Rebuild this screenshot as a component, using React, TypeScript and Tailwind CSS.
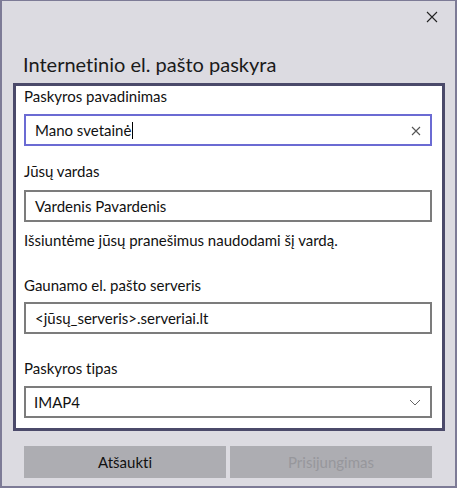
const font = "font-['Lato','Liberation_Sans',sans-serif] [font-variant-ligatures:none]";

function Field({ children, focused }: { children: React.ReactNode; focused?: boolean }) {
  return (
    <div
      className={`relative mx-[8px] flex h-[32px] w-[408px] items-center border-2 bg-white pl-[9px] text-[15px] leading-[28px] text-[#111] ${
        focused ? 'border-[#6b6bd3]' : 'border-[#7c7c7c]'
      }`}
    >
      {children}
    </div>
  );
}

function Label({ children, className = '' }: { children: React.ReactNode; className?: string }) {
  return <div className={`ml-[8px] h-[20px] text-[15px] leading-[20px] text-[#111] ${className}`}>{children}</div>;
}

export default function App() {
  return (
    <div className={`${font} flex h-[488px] w-[457px] flex-col border-t border-r-2 border-b-2 border-l-2 border-[#7d7b96] bg-[#dcdbe1]`}>
      {/* header */}
      <div className="flex h-[49px] justify-end pt-[10px] pr-[17px]">
        <svg width="12" height="12" viewBox="0 0 12 12" className="text-[#222]">
          <path d="M1 1 L11 11 M11 1 L1 11" stroke="currentColor" strokeWidth="1.1" />
        </svg>
      </div>

      <div className="ml-[21px] h-[28px] text-[20px] leading-[28px] text-[#1a1a1a]">
        Internetinio el. pašto paskyra
      </div>

      {/* form panel */}
      <div className="mt-[5px] ml-[11px] flex h-[348px] w-[432px] flex-col border-[3px] border-[#4b4a6a] bg-white pb-[10px]">
        <Label>Paskyros pavadinimas</Label>
        <div className="mt-[8px]">
          <Field focused>
            <span>Mano svetainė</span>
            <span className="ml-[1px] h-[17px] w-px bg-black" />
            <svg width="10" height="10" viewBox="0 0 10 10" className="absolute top-[10px] right-[9px] text-[#555]">
              <path d="M1 1 L9 9 M9 1 L1 9" stroke="currentColor" strokeWidth="1.1" />
            </svg>
          </Field>
        </div>

        <Label className="mt-[15px]">Jūsų vardas</Label>
        <div className="mt-[9px]">
          <Field>Vardenis Pavardenis</Field>
        </div>

        <Label className="mt-[8px]">Išsiuntėme jūsų pranešimus naudodami šį vardą.</Label>

        <Label className="mt-[25px]">Gaunamo el. pašto serveris</Label>
        <div className="mt-[7px]">
          <Field>&lt;jūsų_serveris&gt;.serveriai.lt</Field>
        </div>

        <Label className="mt-[24px]">Paskyros tipas</Label>
        <div className="mt-[8px] mx-[8px] relative flex h-[32px] w-[408px] items-center border-2 border-[#7c7c7c] bg-white pl-[8px] text-[15px] leading-[28px] text-[#111]">
          IMAP4
          <svg width="12" height="7" viewBox="0 0 12 7" className="absolute top-[11px] right-[9px] text-[#666]">
            <path d="M1 1 L6 6 L11 1" stroke="currentColor" strokeWidth="1" fill="none" />
          </svg>
        </div>
      </div>

      {/* buttons */}
      <div className="mt-[15px] ml-[22px] flex gap-[4px]">
        <button className="h-[32px] w-[202px] bg-[#adadb2] text-[15px] text-[#111]">Atšaukti</button>
        <button className="h-[32px] w-[202px] bg-[#adadb2] text-[15px] text-[#97979c]" disabled>
          Prisijungimas
        </button>
      </div>
    </div>
  );
}
